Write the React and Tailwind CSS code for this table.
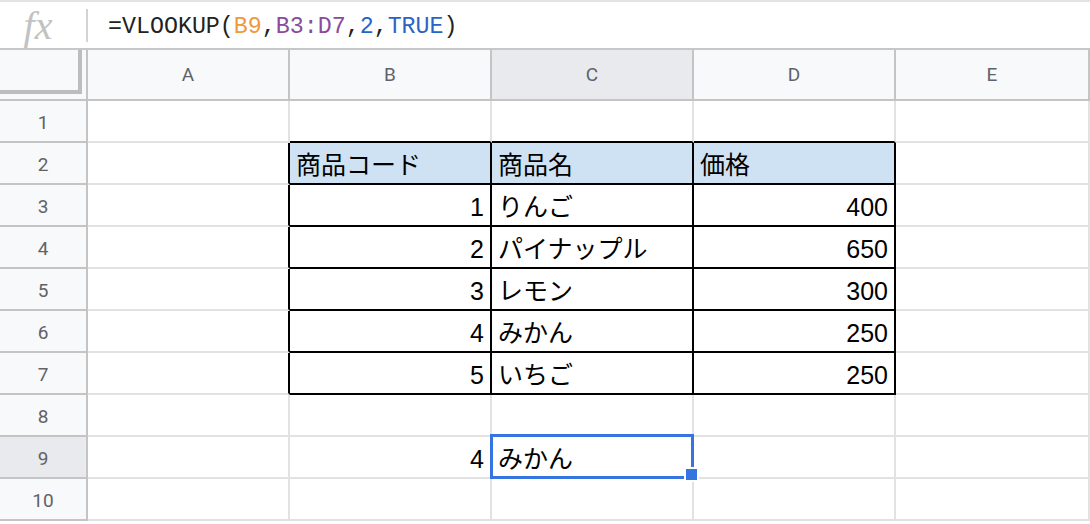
import React from "react";

const COLS = ["A", "B", "C", "D", "E"];

const DATA = {
  2: { B: { t: "商品コード" }, C: { t: "商品名" }, D: { t: "価格" } },
  3: { B: { t: "1", r: true }, C: { t: "りんご" }, D: { t: "400", r: true } },
  4: { B: { t: "2", r: true }, C: { t: "パイナップル" }, D: { t: "650", r: true } },
  5: { B: { t: "3", r: true }, C: { t: "レモン" }, D: { t: "300", r: true } },
  6: { B: { t: "4", r: true }, C: { t: "みかん" }, D: { t: "250", r: true } },
  7: { B: { t: "5", r: true }, C: { t: "いちご" }, D: { t: "250", r: true } },
  9: { B: { t: "4", r: true }, C: { t: "みかん" } },
};

const cellFont = {
  fontFamily: '"Liberation Sans", "Noto Sans CJK JP", sans-serif',
};

function Cell({ row, col }) {
  const inTable = row >= 2 && row <= 7;
  const blackRight = inTable && ["A", "B", "C", "D"].includes(col);
  const blackBottom = row >= 1 && row <= 7 && ["B", "C", "D"].includes(col);
  const headerFill = row === 2 && ["B", "C", "D"].includes(col);
  const d = DATA[row] && DATA[row][col];
  const selected = row === 9 && col === "C";
  return (
    <div
      className={[
        "relative h-[42px] border-r-2 border-b-2 flex items-center px-[6px] text-[25px] text-black leading-none",
        blackRight ? "border-r-black" : "border-r-[#e2e2e2]",
        blackBottom ? "border-b-black" : "border-b-[#e2e2e2]",
        headerFill ? "bg-[#cfe2f3]" : "bg-white",
        d && d.r ? "justify-end" : "justify-start",
        selected ? "z-10" : "",
      ].join(" ")}
      style={cellFont}
    >
      {d ? <span className="pt-[5px] whitespace-nowrap">{d.t}</span> : null}
      {selected ? (
        <>
          <div className="absolute left-[-2px] top-[-3px] right-[-2px] bottom-[-2px] border-[3px] border-[#3674e0] pointer-events-none" />
          <div className="absolute right-[-7px] bottom-[-5px] w-[15px] h-[15px] bg-[#3674e0] border-2 border-white" />
        </>
      ) : null}
    </div>
  );
}

export default function App() {
  const rows = [1, 2, 3, 4, 5, 6, 7, 8, 9, 10];
  return (
    <div className="w-[1090px] h-[524px] overflow-hidden bg-white">
      {/* formula bar */}
      <div className="h-[50px] border-t-2 border-t-[#e3e3e3] border-b-2 border-b-[#c7c7c7] flex items-center">
        <div className="w-[86px] flex items-center justify-center">
          <span
            className="text-[40px] italic text-[#c2c2c2] leading-none pt-[2px] pr-[10px]"
            style={{ fontFamily: '"Liberation Serif", "DejaVu Serif", serif' }}
          >
            fx
          </span>
        </div>
        <div className="w-[2px] h-[33px] bg-[#d3d3d3]" />
        <div
          className="pl-[20px] pt-[6px] text-[23.3px] leading-none text-[#222] whitespace-nowrap"
          style={{ fontFamily: '"Liberation Mono", "DejaVu Sans Mono", monospace' }}
        >
          <span>=VLOOKUP(</span>
          <span className="text-[#ee9a3a]">B9</span>
          <span>,</span>
          <span className="text-[#8a4a9e]">B3:D7</span>
          <span>,</span>
          <span className="text-[#2a63c8]">2</span>
          <span>,</span>
          <span className="text-[#2a63c8]">TRUE</span>
          <span>)</span>
        </div>
      </div>

      {/* grid */}
      <div className="grid grid-cols-[88px_202px_202px_202px_202px_1fr]">
        {/* header row */}
        <div className="h-[51px] bg-[#f8f9fa] border-r-2 border-b-2 border-[#c4c4c4] relative">
          <div className="w-[82px] h-[44px] border-r-4 border-b-4 border-[#bdbdbd]" />
        </div>
        {COLS.map((c) => (
          <div
            key={c}
            className={[
              "h-[51px] border-r-2 border-b-2 border-[#c4c4c4] flex items-center justify-center pt-[2px] text-[19px] text-[#5f6368]",
              c === "C" ? "bg-[#e8eaed]" : "bg-[#f8f9fa]",
            ].join(" ")}
            style={{ fontFamily: 'Roboto, "Liberation Sans", sans-serif' }}
          >
            {c}
          </div>
        ))}

        {rows.map((r) => (
          <React.Fragment key={r}>
            <div
              className={[
                "h-[42px] border-r-2 border-b-2 border-[#c4c4c4] flex items-center justify-center pt-[5px] text-[19px] text-[#5f6368]",
                r === 9 ? "bg-[#e8eaed]" : "bg-[#f8f9fa]",
              ].join(" ")}
              style={{ fontFamily: 'Roboto, "Liberation Sans", sans-serif' }}
            >
              {r}
            </div>
            {COLS.map((c) => (
              <Cell key={c} row={r} col={c} />
            ))}
          </React.Fragment>
        ))}
      </div>
    </div>
  );
}
